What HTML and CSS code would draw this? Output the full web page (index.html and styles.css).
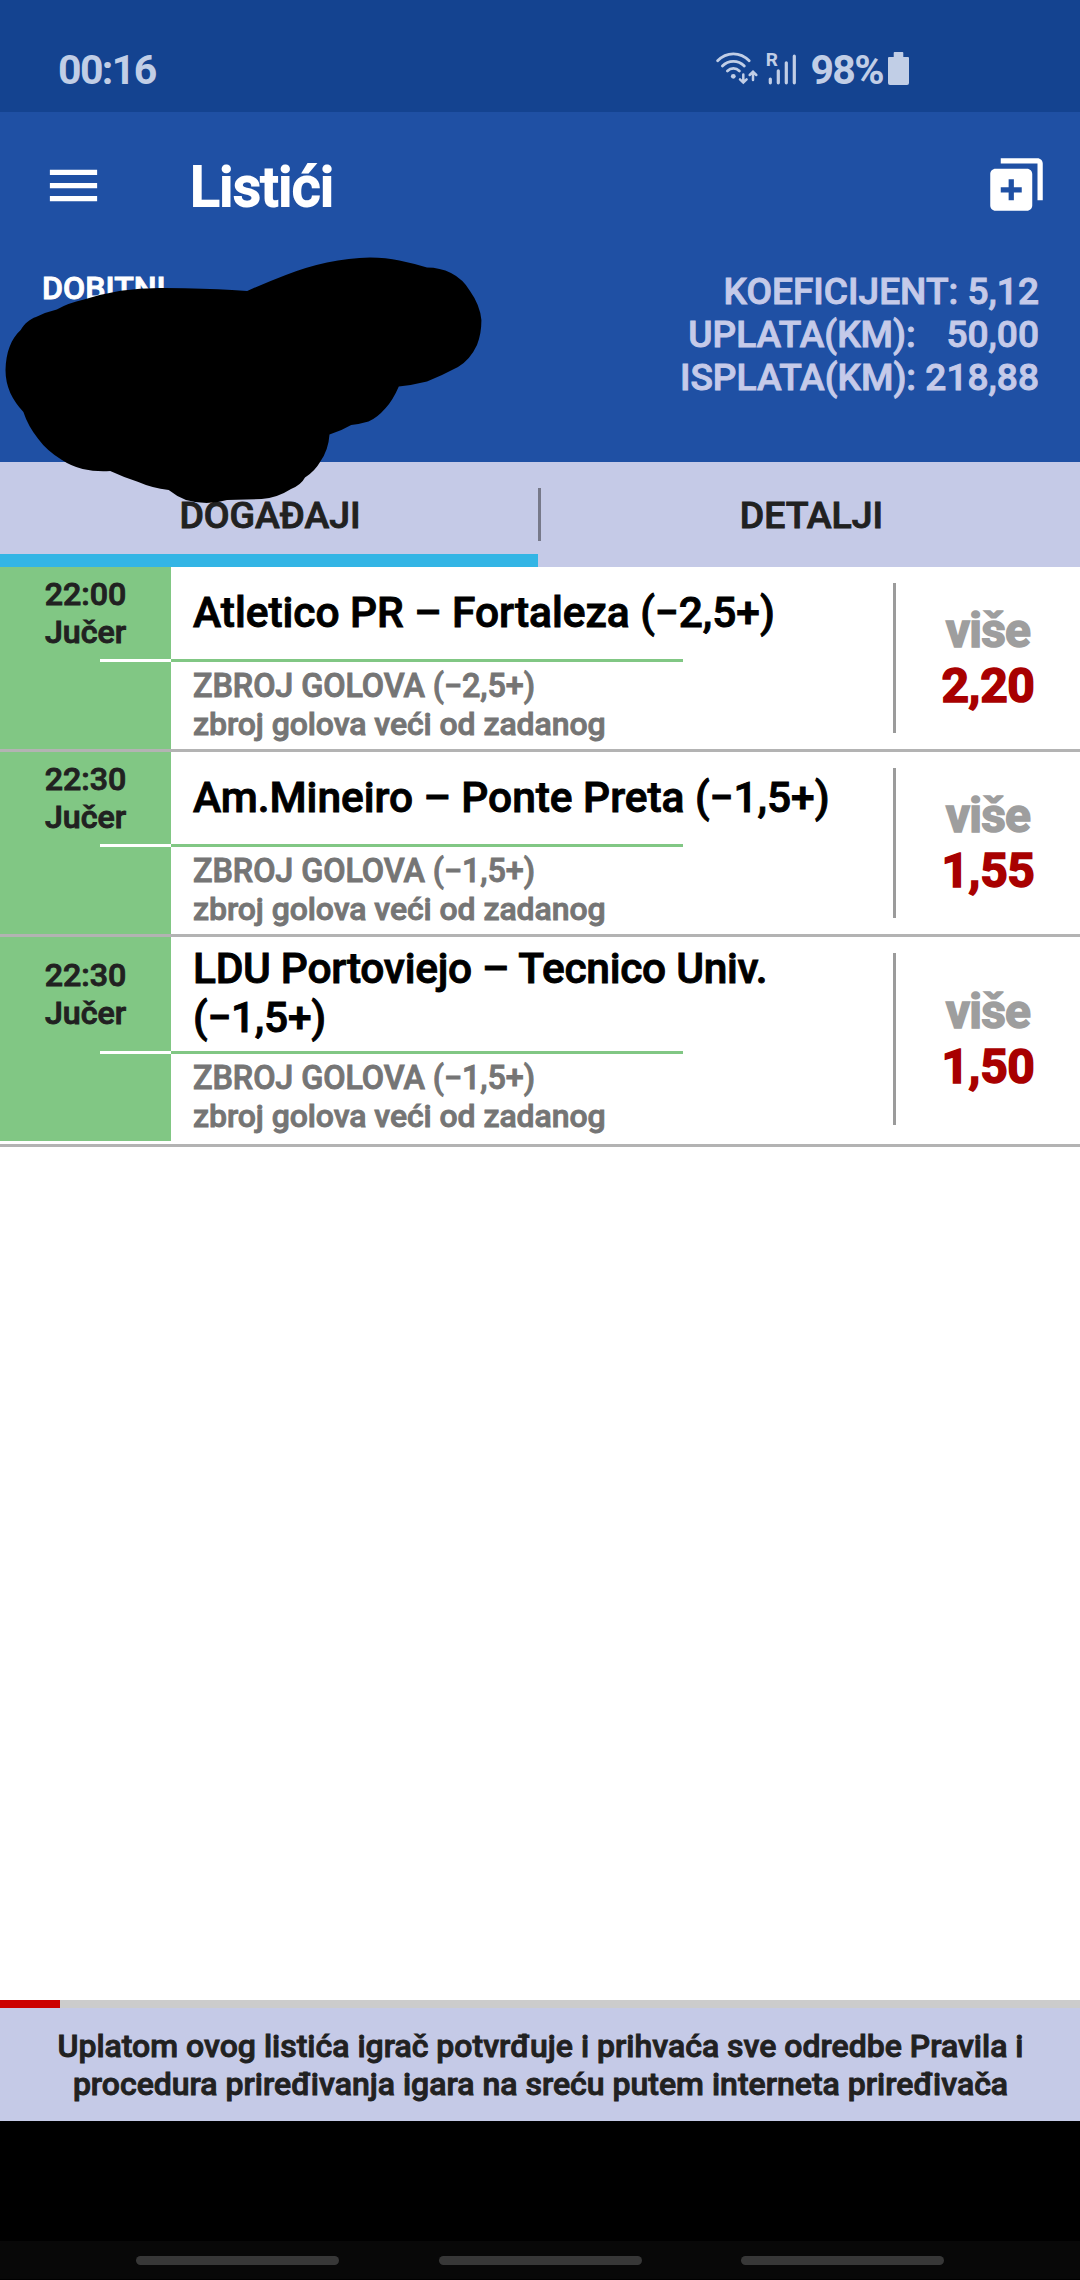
FILE: index.html
```html
<!DOCTYPE html>
<html lang="hr">
<head>
	<meta charset="utf-8">
	<title>Listići</title>
	<link rel="stylesheet" href="styles.css">
</head>
<body>
<div class="screen">
	<div class="status_bar">
		<span class="clock">00:16</span>
		<svg class="signal" width="84" height="36" viewBox="0 0 84 36">
			<g fill="none" stroke="currentColor" stroke-width="2.8" stroke-linecap="round">
				<path d="M1.6 10.8C10.5 1.5 24.2 1.5 33.2 10.8"/>
				<path d="M6.4 16C12.5 9.8 22.2 9.8 28.3 16"/>
				<path d="M11.4 20.9C14.8 17.5 20 17.5 23.4 20.9"/>
				<path d="M27.3 24.5V32M24 29.4L27.3 32.6L30.6 29.4M37 30V22.5M33.7 25L37 21.7L40.3 25" stroke-width="2.5"/>
				<path d="M54.3 29V32.8M62.3 20.8V32.8M70.3 12.8V32.8M78.3 6.2V32.8" stroke-width="3.2"/>
			</g>
			<circle cx="17.3" cy="26.3" r="2.4" fill="currentColor"/>
			<text class="roaming" x="49.8" y="16">R</text>
		</svg>
		<span class="percent">98%</span>
		<svg class="battery" width="21" height="33" viewBox="0 0 21 33" fill="currentColor">
			<path d="M6.5 0H14.5Q15.3 0 15.3 1V5H20Q21 5 21 6V31Q21 33 19 33H2Q0 33 0 31V6Q0 5 1 5H5.7V1Q5.7 0 6.5 0Z"/>
		</svg>
	</div>
	<div class="app_bar">
		<svg class="menu" width="63" height="63" viewBox="0 0 24 24" fill="#fff">
			<path d="M3 18h18v-2H3v2zm0-5h18v-2H3v2zm0-7v2h18V6H3z"/>
		</svg>
		<h1 class="title">Listići</h1>
		<svg class="add" width="63" height="63" viewBox="0 0 24 24" fill="#fff">
			<path d="M4 6h12c1.100 0 2 .9 2 2v12c0 1.100-.9 2-2 2H4c-1.100 0-2-.9-2-2V8c0-1.100.9-2 2-2zm5 4v3H6v2h3v3h2v-3h3v-2h-3v-3H9z"/>
			<path d="M6 2h14c1.100 0 2 .9 2 2v14h-2V4H6z"/>
		</svg>
	</div>
	<div class="summary">
		<div class="ticket_status">DOBITNI</div>
		<div class="amounts">
			<p>KOEFICIJENT: 5,12</p>
			<p class="stake">UPLATA(KM):   50,00</p>
			<p>ISPLATA(KM): 218,88</p>
		</div>
		<svg class="scribble" width="490" height="260" viewBox="0 250 490 260">
			<path d="M5.500 370C6 352 11 339 20.700 330C25 323 30 319 36 317Q46 312 56.800 309.500Q68 303 84 299.500Q101 294 120.500 290.700Q143 287.500 165 288Q206 288.500 232 290L247.200 291Q265 283 285.800 275Q306 267 327 262.500Q349 258 370 257.500Q386 257.500 399.400 260.500Q414 263.500 427 267.500Q440 267.500 451 273Q463 279 470 291Q480 305 481.400 320Q481.500 334 477 345Q470 360 458 367Q443 375 427 381.500Q413 385 398.800 386.500Q393 400 385.700 408Q377 418 368.500 421.500Q360 424 351.200 425Q341 431 329.500 434.500Q328.500 450 320.200 461.700Q315 471 305 477.500Q301 485 291 489Q277 498 261.700 499L227 500Q217 503 206.600 503Q196 503 186 500Q176 496 168.700 490Q152 488 137.700 481.700Q123 477 110.200 471Q96 472 82.600 469Q71 466 62 460Q47 451 37.900 438.500Q28 426 23.400 412Q15 403 10.300 393Q5.500 382 5.500 370Z"/>
		</svg>
	</div>
	<div class="tabs">
		<div class="tab active">DOGAĐAJI</div>
		<div class="tab_divider"></div>
		<div class="tab">DETALJI</div>
	</div>
	<div class="events">
		<div class="event">
			<div class="time"><span>22:00</span><span>Jučer</span></div>
			<div class="teams">Atletico PR – Fortaleza (−2,5+)</div>
			<div class="line_left"></div>
			<div class="line_right"></div>
			<div class="time_rest"></div>
			<div class="bet"><p class="bet_name">ZBROJ GOLOVA (−2,5+)</p><p>zbroj golova veći od zadanog</p></div>
			<div class="odds"><span class="pick">više</span><span class="value">2,20</span></div>
		</div>
		<div class="event">
			<div class="time"><span>22:30</span><span>Jučer</span></div>
			<div class="teams">Am.Mineiro – Ponte Preta (−1,5+)</div>
			<div class="line_left"></div>
			<div class="line_right"></div>
			<div class="time_rest"></div>
			<div class="bet"><p class="bet_name">ZBROJ GOLOVA (−1,5+)</p><p>zbroj golova veći od zadanog</p></div>
			<div class="odds"><span class="pick">više</span><span class="value">1,55</span></div>
		</div>
		<div class="event last">
			<div class="time"><span>22:30</span><span>Jučer</span></div>
			<div class="teams">LDU Portoviejo – Tecnico Univ. (−1,5+)</div>
			<div class="line_left"></div>
			<div class="line_right"></div>
			<div class="time_rest"></div>
			<div class="bet"><p class="bet_name">ZBROJ GOLOVA (−1,5+)</p><p>zbroj golova veći od zadanog</p></div>
			<div class="odds"><span class="pick">više</span><span class="value">1,50</span></div>
		</div>
	</div>
	<div class="progress"><div class="progress_fill"></div></div>
	<div class="terms">Uplatom ovog listića igrač potvrđuje i prihvaća sve odredbe Pravila i<br>procedura priređivanja igara na sreću putem interneta priređivača</div>
	<div class="spacer"></div>
	<div class="nav_bar">
		<span></span>
		<span></span>
		<span></span>
	</div>
</div>
</body>
</html>
```
FILE: styles.css
```css
* {
	box-sizing: border-box;
}
body {
	margin: 0;
	font-family: Roboto, sans-serif;
	font-weight: 500;
	-webkit-text-stroke: 0.9px;
}
p {
	margin: 0;
}
svg {
	display: block;
	flex: none;
}
.screen {
	display: flex;
	flex-direction: column;
	width: 1080px;
	height: 2280px;
	background-color: #fff;
}

/* status bar */
.status_bar {
	display: flex;
	align-items: flex-start;
	height: 112px;
	padding: 50px 171px 0 58px;
	background-color: #144390;
	color: #c1cee6;
	font-weight: 700;
	font-size: 41px;
	line-height: 40px;
	-webkit-text-stroke: 0;
}
.clock {
	letter-spacing: -1.6px;
}
.signal {
	margin-left: auto;
	overflow: visible;
}
.roaming {
	font-size: 19px;
	letter-spacing: 0;
	fill: currentColor;
}
.percent {
	margin-left: 10px;
	letter-spacing: -1.6px;
}
.battery {
	margin: 2px 0 0 5px;
}

/* header */
.app_bar {
	display: flex;
	align-items: center;
	height: 145px;
	padding: 0 32px 0 42px;
	background-color: #1f50a4;
	color: #fff;
}
.menu {
	margin-top: 1px;
}
.title {
	margin: 0 auto 0 85px;
	padding-top: 5px;
	font-size: 55px;
	font-weight: 500;
	line-height: 64px;
	letter-spacing: -0.5px;
	-webkit-text-stroke: 1.8px;
}
.summary {
	position: relative;
	display: flex;
	justify-content: space-between;
	height: 205px;
	padding: 13px 41px 0 42px;
	background-color: #1f50a4;
}
.ticket_status {
	margin-top: -1px;
	color: #fff;
	font-size: 32.2px;
	line-height: 38px;
}
.amounts {
	color: #c5cae9;
	font-size: 37.1px;
	line-height: 43px;
	text-align: right;
}
.amounts p {
	white-space: pre;
}
.stake {
	word-spacing: 1px;
}
.scribble {
	position: absolute;
	left: 0;
	top: -7px;
	z-index: 1;
}

/* tabs */
.tabs {
	display: flex;
	height: 105px;
	background-color: #c5cae7;
	color: #212121;
}
.tab {
	display: flex;
	flex: 1;
	align-items: center;
	justify-content: center;
	padding: 14px 0 0 2px;
	border-bottom: 13px solid transparent;
	font-size: 37.4px;
}
.tab.active {
	flex: none;
	width: 538px;
	border-color: #33b5e5;
}
.tab_divider {
	width: 3px;
	height: 53px;
	margin-top: 26px;
	background-color: #77798a;
}

/* list of events */
.events {
	flex: 1;
}
.event {
	display: grid;
	grid-template-columns: 171px 722px 187px;
	grid-template-rows: minmax(92px, auto) 3px 87px;
	border-bottom: 3px solid #b3b3b3;
}
.event.last {
	padding-bottom: 3px;
}
.time {
	display: flex;
	flex-direction: column;
	justify-content: center;
	padding-bottom: 1px;
	background-color: #81c784;
	color: #212121;
	font-size: 32.2px;
	line-height: 38px;
	text-align: center;
}
.time_rest {
	background-color: #81c784;
}
.teams {
	display: flex;
	align-items: center;
	padding: 7px 40px 9px 22px;
	color: #000;
	font-size: 42.5px;
	line-height: 49px;
	letter-spacing: -0.05px;
}
.last .teams {
	letter-spacing: -0.3px;
}
.line_left {
	border-left: 100px solid #81c784;
	background-color: #fff;
}
.line_right {
	width: 512px;
	background-color: #81c784;
}
.bet {
	padding: 5px 0 0 22px;
	color: #757575;
	font-size: 32px;
	line-height: 38px;
	letter-spacing: -0.08px;
}
.bet_name {
	font-size: 32.4px;
}
.odds {
	grid-column: 3;
	grid-row: 1 / 4;
	display: flex;
	flex-direction: column;
	justify-content: center;
	margin: 16px 0;
	border-left: 3px solid #9b9b9b;
	font-size: 48px;
	font-weight: 700;
	line-height: 55px;
	text-align: center;
	-webkit-text-stroke: 1.5px;
}
.pick {
	color: #9e9e9e;
	letter-spacing: -0.8px;
}
.value {
	color: #a80000;
	letter-spacing: -0.3px;
}

/* footer */
.progress {
	height: 8px;
	background-color: #ccc;
}
.progress_fill {
	width: 60px;
	height: 8px;
	background-color: #c00;
}
.terms {
	height: 113px;
	padding: 19px 0 0 1px;
	background-color: #c5cae7;
	color: #212121;
	font-size: 32px;
	line-height: 38px;
	text-align: center;
	white-space: nowrap;
}
.spacer {
	height: 120px;
	background-color: #000;
}
.nav_bar {
	display: flex;
	justify-content: center;
	gap: 99.5px;
	height: 39px;
	padding-top: 15px;
	border-bottom: 1px solid #000;
	background-color: #080808;
}
.nav_bar span {
	width: 203px;
	height: 9px;
	border-radius: 5px;
	background-color: #373737;
}
```
